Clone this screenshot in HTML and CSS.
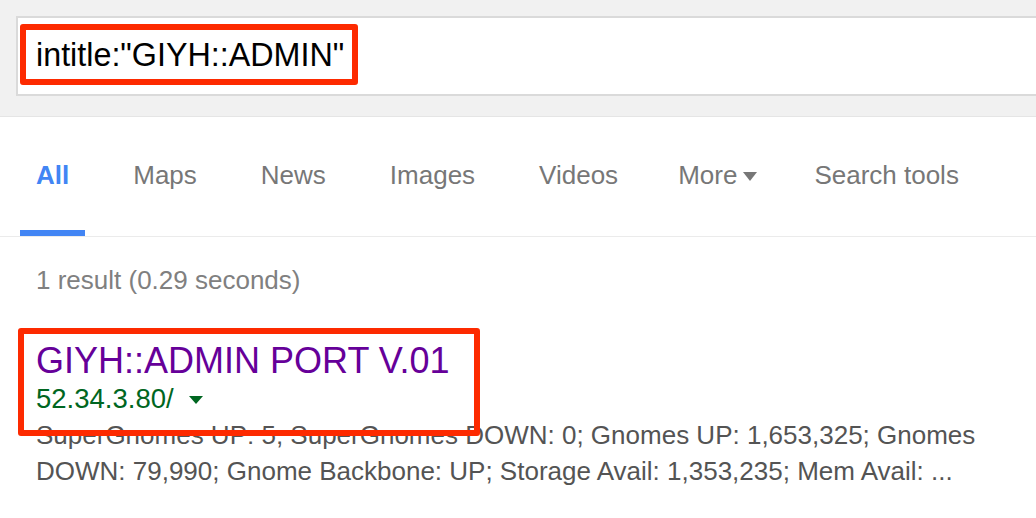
FILE: index.html
```html
<!DOCTYPE html>
<html>
<head>
<meta charset="utf-8">
<link rel="stylesheet" href="styles.css">
</head>
<body>
<header class="top">
  <div class="searchbox">
    <span class="query">intitle:"GIYH::ADMIN"</span>
  </div>
</header>
<nav class="tabs">
  <a class="tab active">All</a>
  <a class="tab">Maps</a>
  <a class="tab">News</a>
  <a class="tab">Images</a>
  <a class="tab">Videos</a>
  <a class="tab more">More<span class="caret"></span></a>
  <a class="tab tools">Search tools</a>
</nav>
<main class="content">
  <div class="stats">1 result (0.29 seconds)</div>
  <div class="result">
    <div class="highlight"></div>
    <div class="title">GIYH::ADMIN PORT V.01</div>
    <div class="url">52.34.3.80/<span class="url-caret"></span></div>
    <div class="snippet">SuperGnomes UP: 5; SuperGnomes DOWN: 0; Gnomes UP: 1,653,325; Gnomes DOWN: 79,990; Gnome Backbone: UP; Storage Avail: 1,353,235; Mem Avail: ...</div>
  </div>
</main>
</body>
</html>
```
FILE: styles.css
```css
html, body {
  margin: 0;
  padding: 0;
  background: #fff;
  font-family: "Liberation Sans", Arial, sans-serif;
  overflow: hidden;
}

.top {
  background: #f1f1f1;
  padding: 16px 0 20px 16px;
  border-bottom: 1px solid #e5e5e5;
  display: flex;
}

.searchbox {
  flex: 1;
  height: 76px;
  background: #fff;
  border: 2px solid #dadada;
  border-right: none;
  display: flex;
  align-items: flex-start;
}

.query {
  margin: 6px 0 0 2px;
  border: 6px solid #fd2a00;
  border-radius: 3px;
  padding: 7px 8px 6px 10px;
  font-size: 32.3px;
  line-height: 36px;
  color: #000;
  white-space: nowrap;
}

.tabs {
  display: flex;
  padding-left: 20px;
  gap: 32px;
  border-bottom: 1px solid #ebebeb;
}

.tab {
  padding: 40px 16px 37px;
  border-bottom: 6px solid transparent;
  font-size: 26px;
  line-height: 36px;
  color: #777;
  white-space: nowrap;
  display: flex;
  align-items: center;
}

.tab.active {
  color: #4285f4;
  font-weight: bold;
  border-bottom-color: #4285f4;
}

.tab.more {
  margin-left: -4px;
}

.tab.tools {
  margin-left: -7px;
}

.caret {
  display: inline-block;
  margin-left: 6px;
  margin-top: 3px;
  border-left: 7.5px solid transparent;
  border-right: 7.5px solid transparent;
  border-top: 9px solid #777;
}

.content {
  padding-left: 36px;
}

.stats {
  margin-top: 25px;
  font-size: 26px;
  line-height: 36px;
  color: #808080;
}

.result {
  position: relative;
  margin-top: 41px;
  max-width: 1000px;
}

.highlight {
  position: absolute;
  top: -11px;
  left: -18px;
  width: 462px;
  height: 108px;
  box-sizing: border-box;
  border: 6px solid #fd2a00;
  border-radius: 3px;
  z-index: 2;
}

.title {
  font-size: 36px;
  line-height: 43px;
  color: #660099;
  white-space: nowrap;
}

.url {
  font-size: 27.5px;
  line-height: 34.5px;
  color: #006621;
  display: flex;
  align-items: center;
}

.url-caret {
  display: inline-block;
  margin-left: 15px;
  margin-top: 2px;
  border-left: 7px solid transparent;
  border-right: 7px solid transparent;
  border-top: 8px solid #006621;
}

.snippet {
  font-size: 26px;
  line-height: 36.4px;
  color: #545454;
}
```
